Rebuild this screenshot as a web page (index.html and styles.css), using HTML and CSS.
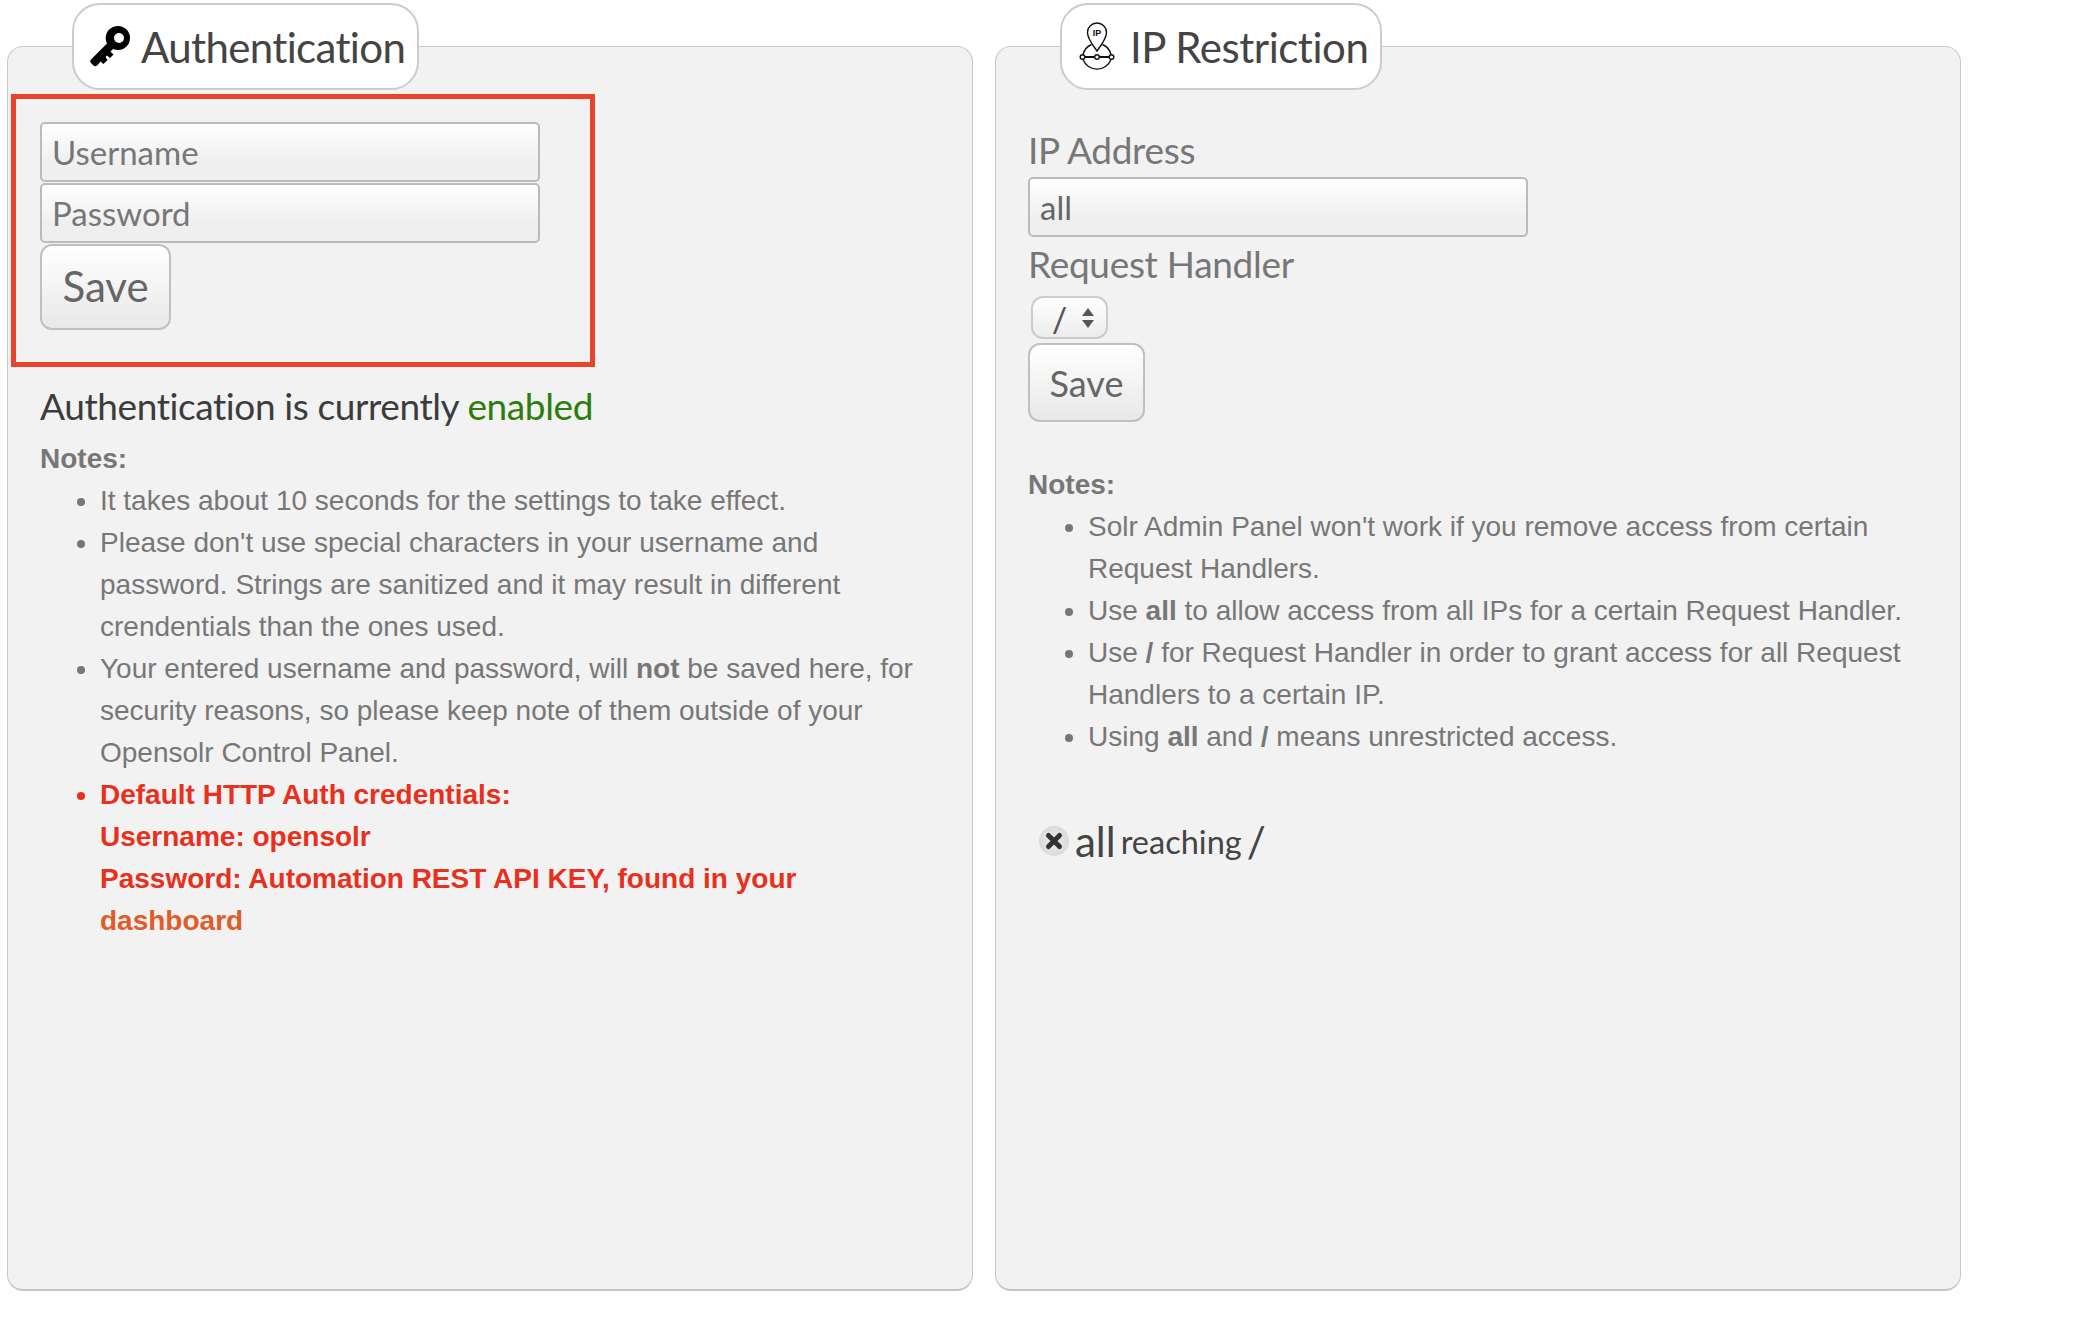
FILE: index.html
```html
<!DOCTYPE html>
<html lang="en">

<head>
    <meta charset="UTF-8">
    <title>Authentication and IP Restriction</title>
    <link rel="stylesheet" href="styles.css">
</head>

<body>
    <div class="panels">
        <!-- Authentication -->
        <section class="panel">
            <h2 class="tab">
                <svg class="tab-icon" width="42" height="42" viewBox="0 0 42 42">
                    <path fill="#000" fill-rule="evenodd" d="M28 0a12 12 0 0 1 12 12a12 12 0 0 1-12 12c-1.800 0-3.500-.4-5-1.100L20.500 25.500l3 3-3.500 3.500-3-2.500-1.500 1.500 2 3-4 4-3-2.500L8.500 38l-1.500 1.500c-1 1-2.500 1-3.500 0L1 37c-1-1-1-2.500 0-3.500L17 17.500A12 12 0 0 1 28 0zm1 7a5 5 0 1 0 0 10a5 5 0 0 0 0-10z"/>
                </svg>
                Authentication
            </h2>

            <form class="auth-form">
                <input class="text-input" type="text" placeholder="Username">
                <input class="text-input" type="password" placeholder="Password">
                <button class="save-btn save-btn-large" type="button">Save</button>
            </form>

            <div class="panel-body">
                <p class="status">Authentication is currently <span class="enabled">enabled</span></p>
                <p class="notes-title">Notes:</p>
                <ul class="notes">
                    <li>It takes about 10 seconds for the settings to take effect.</li>
                    <li>Please don't use special characters in your username and password. Strings are sanitized and it may result in different crendentials than the ones used.</li>
                    <li>Your entered username and password, will <b>not</b> be saved here, for security reasons, so please keep note of them outside of your Opensolr Control Panel.</li>
                    <li class="warning">Default HTTP Auth credentials:<br>Username: opensolr<br>Password: Automation REST API KEY, found in your <a href="#">dashboard</a></li>
                </ul>
            </div>
        </section>

        <!-- IP Restriction -->
        <section class="panel">
            <h2 class="tab tab-ip">
                <svg class="tab-icon" width="36" height="50" viewBox="0 0 36 50" fill="none" stroke="#111" stroke-width="1.400">
                    <path d="M18 29C14.500 24 8.500 17 8.500 10.500a9.500 9.500 0 0 1 19 0C27.500 17 21.500 24 18 29z"/>
                    <path d="M12.500 22.500A15 15 0 0 0 4 32.500M23.500 22.500A15 15 0 0 1 32 32.500M4 37.500a15 15 0 0 0 28 0"/>
                    <path d="M6 35H15.500M20.500 35H30" stroke-width="2"/>
                    <circle cx="3.500" cy="35" r="2.300"/>
                    <circle cx="18" cy="35" r="2.300"/>
                    <circle cx="32.500" cy="35" r="2.300"/>
                    <text class="pin-text" x="18" y="14" text-anchor="middle">IP</text>
                </svg>
                IP Restriction
            </h2>

            <form class="ip-form">
                <label class="field-label" for="ip">IP Address</label>
                <input class="text-input" id="ip" type="text" value="all">
                <label class="field-label" for="handler">Request Handler</label>
                <div class="select-wrap">
                    <select class="handler-select" id="handler">
                        <option>/</option>
                    </select>
                    <svg class="select-arrows" width="14" height="22" viewBox="0 0 14 22">
                        <path fill="#555" d="M7 1l6 8H1zM7 21l-6-8h12z"/>
                    </svg>
                </div>
                <button class="save-btn" type="button">Save</button>
            </form>

            <div class="panel-body">
                <p class="notes-title notes-title-ip">Notes:</p>
                <ul class="notes">
                    <li>Solr Admin Panel won't work if you remove access from certain Request Handlers.</li>
                    <li>Use <b>all</b> to allow access from all IPs for a certain Request Handler.</li>
                    <li>Use <b>/</b> for Request Handler in order to grant access for all Request Handlers to a certain IP.</li>
                    <li>Using <b>all</b> and <b>/</b> means unrestricted access.</li>
                </ul>
                <div class="rule">
                    <span class="rule-remove">
                        <svg width="20" height="20" viewBox="0 0 20 20">
                            <path stroke="#333" stroke-width="5" stroke-linecap="round" d="M4.500 4.500l11 11M15.500 4.500l-11 11"/>
                        </svg>
                    </span>
                    <span class="rule-big">all</span> reaching <span class="rule-big">/</span>
                </div>
            </div>
        </section>
    </div>
</body>

</html>
```

FILE: styles.css
```css
body {
    margin: 0;
    background-color: #fff;
    font-family: 'Liberation Sans', Arial, sans-serif;
}

.panels {
    display: flex;
    gap: 22px;
    padding: 46px 115px 0 7px;
}

.panel {
    flex: 0 0 966px;
    box-sizing: border-box;
    height: 1245px;
    background-color: #f2f2f2;
    border: 1px solid #c8c8c8;
    border-bottom: 2px solid #c4c4c4;
    border-radius: 16px;
}

/* Rounded title sitting on the panel edge */
.tab {
    display: inline-flex;
    align-items: center;
    box-sizing: border-box;
    height: 87px;
    margin: -44px 0 0 64px;
    padding: 0 12px 0 16px;
    gap: 9px;
    background-color: #fff;
    border: 2px solid #ccc;
    border-radius: 28px;
    font-family: 'Lato', sans-serif;
    font-size: 42px;
    font-weight: 400;
    letter-spacing: -0.65px;
    color: #444;
    vertical-align: top;
}

.tab-ip {
    gap: 15px;
    padding-left: 17px;
    letter-spacing: -0.45px;
}

.pin-text {
    font-family: 'Liberation Sans', sans-serif;
    font-size: 9px;
    font-weight: 700;
    letter-spacing: 0;
    fill: #111;
    stroke: none;
}

.auth-form {
    display: flex;
    flex-direction: column;
    align-items: flex-start;
    box-sizing: border-box;
    width: 584px;
    height: 273px;
    margin: 4px 0 0 3px;
    padding: 23px 24px;
    border: 5px solid #e8432c;
}

.ip-form {
    display: flex;
    flex-direction: column;
    align-items: flex-start;
    padding: 36px 0 0 32px;
}

.text-input {
    box-sizing: border-box;
    width: 500px;
    height: 60px;
    margin-bottom: 1px;
    padding: 0 10px;
    background: linear-gradient(#fff, #efefef 70%);
    border: 2px solid #bbb;
    border-radius: 5px;
    font-family: 'Lato', sans-serif;
    font-size: 33px;
    color: #666;
}

.text-input::placeholder {
    color: #777;
    opacity: 1;
}

.field-label {
    margin-bottom: 3px;
    font-family: 'Lato', sans-serif;
    font-size: 37px;
    line-height: 48px;
    letter-spacing: -0.3px;
    color: #777;
}

.field-label[for="handler"] {
    margin: 2px 0 8px;
}

.select-wrap {
    position: relative;
    margin: 0 0 4px 3px;
}

.handler-select {
    display: block;
    box-sizing: border-box;
    width: 77px;
    height: 43px;
    padding: 0 0 3px 18px;
    appearance: none;
    background: linear-gradient(#fff, #ececec);
    border: 2px solid #ccc;
    border-radius: 12px;
    font-family: 'Lato', sans-serif;
    font-size: 36px;
    color: #555;
}

.select-arrows {
    position: absolute;
    top: 11px;
    right: 13px;
}

.save-btn {
    box-sizing: border-box;
    width: 117px;
    height: 79px;
    background: linear-gradient(#fff, #e8e8e8);
    border: 2px solid #c0c0c0;
    border-radius: 12px;
    font-family: 'Lato', sans-serif;
    font-size: 36px;
    color: #666;
}

.save-btn-large {
    width: 131px;
    height: 86px;
    margin-top: 0;
    padding-bottom: 4px;
    font-size: 42px;
}

.panel-body {
    padding: 0 48px 0 32px;
}

.status {
    margin: 14px 0 0;
    font-family: 'Lato', sans-serif;
    font-size: 37px;
    line-height: 50px;
    letter-spacing: -0.4px;
    color: #3c3c3c;
}

.enabled {
    color: #2d7d0c;
}

.notes-title {
    margin: 7px 0 0;
    font-size: 28px;
    line-height: 42px;
    font-weight: 700;
    color: #777;
}

.notes-title-ip {
    margin-top: 42px;
}

.notes {
    margin: 0;
    padding-left: 60px;
    font-size: 28px;
    line-height: 42px;
    color: #777;
}

.warning {
    font-weight: 700;
    color: #e8301c;
}

.warning a {
    color: #e05c2a;
    text-decoration: none;
}

.rule {
    display: flex;
    align-items: center;
    gap: 5px;
    margin: 58px 0 0 11px;
    font-family: 'Lato', sans-serif;
    font-size: 32.5px;
    color: #444;
}

.rule-big {
    font-size: 42px;
}

.rule-remove {
    display: flex;
    align-items: center;
    justify-content: center;
    width: 30px;
    height: 30px;
    margin-right: 1px;
    background: radial-gradient(#eee, #d2d2d2);
    border-radius: 50%;
}
```
